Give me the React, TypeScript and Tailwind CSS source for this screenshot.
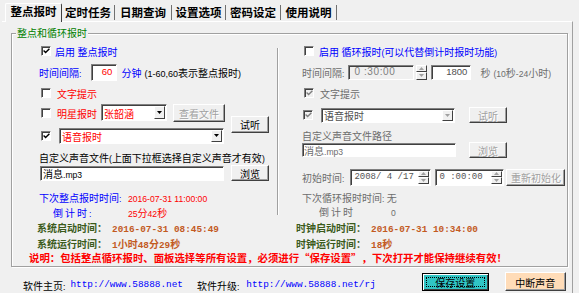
import React from "react";

const HAN = /([\u2E80-\u9FFF\u3000-\u303F\uFF00-\uFFEF\u201C\u201D]+)/;

type TxProps = { t: string; c?: string; latin?: string; han?: string };

// mixed text: latin runs and han runs get different sizes, like the old windows ui font pair
function Tx({ t, c = "", latin = "text-[8.6px]", han = "text-[10px]" }: TxProps) {
  return (
    <span className={`whitespace-pre ${c}`}>
      {t
        .split(HAN)
        .filter((s) => s !== "")
        .map((s, i) => (
          <span key={i} className={HAN.test(s) ? han : latin}>
            {s}
          </span>
        ))}
    </span>
  );
}

function Check({ on, off, className = "" }: { on?: boolean; off?: boolean; className?: string }) {
  return (
    <span
      className={`w-[10px] h-[10px] shrink-0 flex items-center justify-center border border-t-[#808080] border-l-[#808080] border-b-white border-r-white shadow-[inset_1px_1px_0_#404040] ${off ? "bg-[#f0f0f0]" : "bg-white"} ${className}`}
    >
      {on && (
        <svg width="7" height="6" viewBox="0 0 7 6">
          <path d="M0.6 2.6 L2.6 4.6 L6.4 0.8" stroke={off ? "#808080" : "#000"} strokeWidth="1.4" fill="none" />
        </svg>
      )}
    </span>
  );
}

function Box({ className = "", children }: { className?: string; children?: React.ReactNode }) {
  return (
    <div
      className={`shrink-0 flex items-center border border-t-[#808080] border-l-[#808080] border-b-white border-r-white shadow-[inset_1px_1px_0_#404040] ${className}`}
    >
      {children}
    </div>
  );
}

function Btn({
  className = "",
  dis,
  bg = "bg-[#f0f0f0]",
  children,
}: {
  className?: string;
  dis?: boolean;
  bg?: string;
  children?: React.ReactNode;
}) {
  return (
    <div
      className={`shrink-0 flex items-center justify-center border border-t-white border-l-white border-b-[#404040] border-r-[#404040] shadow-[inset_-1px_-1px_0_#a0a0a0] ${bg} ${dis ? "text-[#a0a0a0] [text-shadow:1px_1px_0_#fff]" : "text-black"} ${className}`}
    >
      {children}
    </div>
  );
}

function Tri({ up, dis, w = 5 }: { up?: boolean; dis?: boolean; w?: number }) {
  const h = Math.ceil(w / 2);
  return (
    <svg width={w} height={h} viewBox={`0 0 ${w} ${h}`}>
      <path d={up ? `M0 ${h}H${w}L${w / 2} 0Z` : `M0 0H${w}L${w / 2} ${h}Z`} fill={dis ? "#a0a0a0" : "#000"} />
    </svg>
  );
}

function Raised({ className = "", children }: { className?: string; children?: React.ReactNode }) {
  return (
    <div
      className={`flex items-center justify-center bg-[#f0f0f0] border border-t-white border-l-white border-b-[#404040] border-r-[#404040] ${className}`}
    >
      {children}
    </div>
  );
}

function Combo({ className = "", t, c = "", dis }: { className?: string; t: string; c?: string; dis?: boolean }) {
  return (
    <Box className={`bg-white ${className}`}>
      <span className="flex-1 pl-[2px] overflow-hidden">
        <Tx t={t} c={c} />
      </span>
      <Raised className="w-[11px] self-stretch my-[1px] mr-[1px]">
        <Tri dis={dis} />
      </Raised>
    </Box>
  );
}

function Spin({ className = "" }: { className?: string }) {
  return (
    <div className={`flex flex-col w-[11px] ${className}`}>
      <Raised className="flex-1">
        <Tri up dis w={5} />
      </Raised>
      <Raised className="flex-1">
        <Tri dis w={5} />
      </Raised>
    </div>
  );
}

const tabs = [
  { t: "定时任务", w: "w-[53px]" },
  { t: "日期查询", w: "w-[57px]" },
  { t: "设置选项", w: "w-[54px]" },
  { t: "密码设定", w: "w-[55px]" },
  { t: "使用说明", w: "w-[56px]" },
];

const blue = "text-[#0000ff]";
const red = "text-[#ff0000]";
const gray = "text-[#6d6d6d]";
const mono = "font-['Liberation_Mono',monospace]";
const boldLabel = "text-[#3b5b1b] font-bold";
const boldVal = "text-[#c35a1f] font-bold";

export default function App() {
  return (
    <div className="w-[579px] h-[293px] bg-[#f0f0f0] overflow-hidden leading-none text-black font-['Liberation_Sans','Noto_Sans_CJK_SC',sans-serif]">
      {/* tab strip */}
      <div className="flex items-end h-[21px] pl-[5px] text-[11.5px] font-bold font-['Noto_Sans_CJK_SC',sans-serif]">
        <div className="relative z-10 -mb-px h-[19px] w-[57px] flex items-center justify-center pb-[2px] bg-[#f0f0f0] border-t border-l border-white border-r border-r-[#404040] rounded-t-[2px]">
          整点报时
        </div>
        {tabs.map((tab) => (
          <div key={tab.t} className={`${tab.w} h-[15px] mb-px flex items-center justify-center border-r border-[#707070]`}>
            {tab.t}
          </div>
        ))}
      </div>

      {/* tab page */}
      <div className="ml-[2px] w-[571px] h-[272px] border-t border-white border-r border-r-[#a0a0a0]">
        <div className="relative ml-[9px] mt-[11px] w-[557px] h-[234px] border border-[#a0a0a0] shadow-[inset_1px_1px_0_#fff,1px_1px_0_#fff]">
          <span className="absolute left-[4px] -top-[8px] px-[1px] bg-[#f0f0f0] text-[#008000] text-[10px] leading-[14px] font-['Noto_Sans_CJK_SC',sans-serif]">
            整点和循环报时
          </span>

          <div className="flex pt-[9px]">
            {/* left: hourly */}
            <div className="w-[265px] pl-[27px] flex flex-col">
              <div className="h-[16px] flex items-center">
                <Check on className="ml-[2px]" />
                <Tx t="启用 整点报时" c={`ml-[4px] ${blue}`} />
              </div>
              <div className="h-[26px] flex items-center">
                <Tx t="时间间隔:" c={blue} />
                <Box className="ml-[10px] w-[26px] h-[17px] bg-white justify-end pr-[4px]">
                  <span className={`text-[9.5px] ${red}`}>60</span>
                </Box>
                <Tx t="分钟" c={`ml-[4px] ${blue}`} />
                <Tx t="(1-60,60表示整点报时)" c="ml-[3px]" latin="text-[9px]" />
              </div>
              <div className="h-[16px] flex items-center">
                <Check className="ml-[2px]" />
                <Tx t="文字提示" c={`ml-[6px] ${red}`} />
              </div>
              <div className="flex items-center">
                <div className="w-[186px] flex flex-col">
                  <div className="h-[23px] flex items-center">
                    <Check className="ml-[2px]" />
                    <Tx t="明星报时" c={`ml-[6px] ${red}`} />
                    <Combo className="ml-[4px] w-[66px] h-[17px]" t="张韶涵" c={red} />
                    <Btn dis className="ml-[6px] w-[52px] h-[18px]">
                      <Tx t="查看文件" />
                    </Btn>
                  </div>
                  <div className="h-[23px] flex items-center">
                    <Check on className="ml-[2px]" />
                    <Combo className="ml-[8px] w-[165px] h-[16px]" t="语音报时" c={red} />
                  </div>
                </div>
                <Btn className="ml-[6px] w-[38px] h-[17px]">
                  <Tx t="试听" />
                </Btn>
              </div>
              <div className="mt-[2px] h-[16px] flex items-center">
                <Tx t="自定义声音文件(上面下拉框选择自定义声音才有效)" />
              </div>
              <div className="h-[16px] flex items-center">
                <Box className="ml-[1px] w-[184px] h-[15px] bg-white pl-[2px]">
                  <Tx t="消息.mp3" />
                </Box>
                <Btn className="ml-[7px] w-[38px] h-[16px]">
                  <Tx t="浏览" />
                </Btn>
              </div>
              <div className="mt-[8px] h-[16px] flex items-center">
                <span className="w-[89px]">
                  <Tx t="下次整点报时时间:" c={blue} />
                </span>
                <Tx t="2016-07-31 11:00:00" c={red} />
              </div>
              <div className="h-[14px] flex items-center">
                <span className="w-[89px] pl-[14px]">
                  <Tx t="倒计时:" c={`${blue} tracking-[2px]`} />
                </span>
                <Tx t="25分42秒" c={red} />
              </div>
            </div>

            <div className="self-start mt-[5px] h-[167px] w-[2px] border-l border-[#a0a0a0] border-r border-r-white" />

            {/* right: cycle */}
            <div className="flex-1 pl-[23px] flex flex-col">
              <div className="h-[16px] flex items-center">
                <Check className="ml-[2px]" />
                <Tx t="启用 循环报时(可以代替倒计时报时功能)" c={`ml-[5px] ${blue}`} />
              </div>
              <div className="h-[26px] flex items-center">
                <Tx t="时间间隔:" c={gray} />
                <Box className="ml-[4px] w-[66px] h-[15px] bg-[#f0f0f0] pl-[5px]">
                  <span className="text-[10px] tracking-[0.6px] text-[#808080]">0 :30:00</span>
                </Box>
                <Spin className="ml-[2px] h-[15px]" />
                <Box className="ml-[4px] w-[40px] h-[15px] bg-white justify-end pr-[3px]">
                  <span className="text-[9.5px] text-[#505050]">1800</span>
                </Box>
                <Tx t="秒" c={`ml-[9px] ${gray}`} />
                <Tx t="(10秒-24小时)" c={`ml-[3px] ${gray}`} />
              </div>
              <div className="h-[16px] flex items-center">
                <Check on off className="ml-[2px]" />
                <Tx t="文字提示" c={`ml-[6px] ${gray}`} />
              </div>
              <div className="h-[28px] flex items-center">
                <Check on off className="ml-[1px]" />
                <Combo dis className="ml-[8px] w-[134px] h-[15px]" t="语音报时" c="text-[#505050]" />
                <Btn dis className="ml-[14px] w-[38px] h-[16px]">
                  <Tx t="试听" />
                </Btn>
              </div>
              <div className="h-[12px] flex items-center">
                <Tx t="自定义声音文件路径" c={gray} />
              </div>
              <div className="h-[17px] flex items-center">
                <Box className="w-[154px] h-[14px] bg-white pl-[1px]">
                  <Tx t="消息.mp3" c={gray} />
                </Box>
                <Btn dis className="ml-[13px] w-[38px] h-[16px]">
                  <Tx t="浏览" />
                </Btn>
              </div>
              <div className="mt-[9px] h-[20px] flex items-center">
                <Tx t="初始时间:" c={gray} />
                <Box className="ml-[6px] w-[81px] h-[17px] bg-white pl-[3px]">
                  <span className={`flex-1 ${mono} text-[9px] text-[#555]`}>2008/ 4 /17</span>
                  <Spin className="self-stretch my-[1px] mr-[1px]" />
                </Box>
                <Box className="ml-[4px] w-[69px] h-[17px] bg-white pl-[3px]">
                  <span className={`flex-1 ${mono} text-[9px] text-[#555] whitespace-pre`}>0 :00:00</span>
                  <Spin className="self-stretch my-[1px] mr-[1px]" />
                </Box>
                <Btn dis className="ml-[2px] w-[59px] h-[17px]">
                  <Tx t="重新初始化" />
                </Btn>
              </div>
              <div className="mt-[3px] h-[14px] flex items-center">
                <Tx t="下次循环报时时间: 无" c={gray} />
              </div>
              <div className="h-[14px] flex items-center">
                <span className="w-[89px] pl-[17px]">
                  <Tx t="倒计时" c={`${gray} tracking-[2px]`} />
                </span>
                <Tx t="0" c={gray} />
              </div>
            </div>
          </div>

          {/* run times */}
          <div className="flex h-[16px] items-center">
            <div className="w-[266px] pl-[25px] flex items-center">
              <span className="w-[75px]">
                <Tx t="系统启动时间：" c={boldLabel} />
              </span>
              <Tx t="2016-07-31 08:45:49" c={boldVal} latin={`${mono} text-[9.4px]`} />
            </div>
            <div className="pl-[18px] flex items-center">
              <span className="w-[75px]">
                <Tx t="时钟启动时间：" c={boldLabel} />
              </span>
              <Tx t="2016-07-31 10:34:00" c={boldVal} latin={`${mono} text-[9.4px]`} />
            </div>
          </div>
          <div className="flex h-[16px] items-center">
            <div className="w-[266px] pl-[25px] flex items-center">
              <span className="w-[75px]">
                <Tx t="系统运行时间：" c={boldLabel} />
              </span>
              <Tx t="1小时48分29秒" c={boldVal} latin={`${mono} text-[9.4px]`} />
            </div>
            <div className="pl-[18px] flex items-center">
              <span className="w-[75px]">
                <Tx t="时钟运行时间：" c={boldLabel} />
              </span>
              <Tx t="18秒" c={boldVal} latin={`${mono} text-[9.4px]`} />
            </div>
          </div>
          <div className="h-[14px] flex items-center pl-[17px]">
            <span className={`font-['Noto_Sans_CJK_SC',sans-serif] font-bold text-[10.4px] ${red}`}>
              说明：包括整点循环报时、面板选择等所有设置，必须进行
              <span className="inline-block w-[1em] text-right">“</span>
              保存设置
              <span className="inline-block w-[1em] text-left">”</span>
              ，下次打开才能保持继续有效！
            </span>
          </div>
        </div>

        {/* footer */}
        <div className="flex items-center mt-[5px] h-[19px] pl-[21px]">
          <div className="self-stretch flex items-center pt-[7px]">
            <Tx t="软件主页:" />
            <span className={`ml-[5px] ${mono} text-[9.4px] ${blue}`}>http://www.58888.net</span>
            <Tx t="软件升级:" c="ml-[14px]" />
            <span className={`ml-[7px] ${mono} text-[9.4px] ${blue}`}>http://www.58888.net/rj</span>
          </div>
          <div className="ml-[46px] w-[67px] h-[18px] p-[3px] flex border border-black bg-[#30c5c5] shadow-[inset_1px_1px_0_#fff,inset_-1px_-1px_0_#404040]">
            <div className="flex-1 flex items-center justify-center border border-dotted border-black">
              <Tx t="保存设置" />
            </div>
          </div>
          <Btn bg="bg-[#ffdcb8]" className="ml-[16px] w-[61px] h-[19px]">
            <Tx t="中断声音" />
          </Btn>
        </div>
      </div>
    </div>
  );
}
